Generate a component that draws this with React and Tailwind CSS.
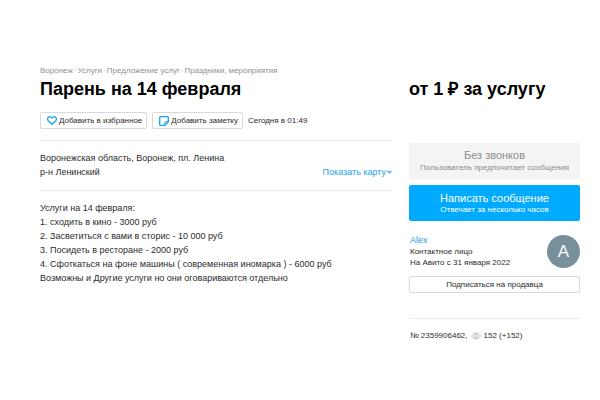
import React from 'react'

const crumbs = ['Воронеж', 'Услуги', 'Предложение услуг', 'Праздники, мероприятия']

const description = [
  'Услуги на 14 февраля:',
  '1. сходить в кино - 3000 руб',
  '2. Засветиться с вами в сторис - 10 000 руб',
  '3. Посидеть в ресторане - 2000 руб',
  '4. Сфоткаться на фоне машины ( современная иномарка ) - 6000 руб',
  'Возможны и Другие услуги но они оговариваются отдельно',
]

function HeartIcon() {
  return (
    <svg viewBox="0 0 10 9" className="h-[9px] w-[10px]" fill="none" stroke="#18a4e8" strokeWidth="1.3" strokeLinejoin="round" aria-hidden="true">
      <path d="M5 8.2 1.3 4.7C.4 3.8.4 2.2 1.2 1.4 2.2.4 3.9.6 5 2 6.1.6 7.8.4 8.8 1.4 9.6 2.2 9.6 3.8 8.7 4.7Z" />
    </svg>
  )
}

function NoteIcon() {
  return (
    <svg viewBox="0 0 10 10" className="size-[10px]" fill="none" stroke="#18a4e8" strokeWidth="1.3" strokeLinejoin="round" aria-hidden="true">
      <path d="M1.6.7h6.8q.9 0 .9.9v4.2L5.8 9.3H1.6q-.9 0-.9-.9V1.6q0-.9.9-.9Z" />
      <path d="M9.3 5.8H6.6q-.8 0-.8.8v2.7" strokeWidth="1" />
    </svg>
  )
}

function EyeIcon() {
  return (
    <svg viewBox="0 0 10 8" className="h-2 w-[10px]" fill="none" stroke="#b4b4b4" strokeWidth=".9" aria-hidden="true">
      <path d="M.6 4C2.7.2 7.3.2 9.4 4 7.3 7.8 2.7 7.8.6 4Z" />
      <circle cx="5" cy="4" r="1.5" />
    </svg>
  )
}

function ActionButton({ icon, children }) {
  return (
    <button type="button" className="flex h-[17px] items-center gap-[2px] rounded-xs border border-[#dadada] pr-1 pl-[6px] text-[8px] leading-none whitespace-nowrap">
      {icon}
      {children}
    </button>
  )
}

function Listing() {
  return (
    <main>
      <nav aria-label="Разделы" className="flex gap-px text-[8px] leading-[10px] whitespace-nowrap text-[#8f8f8f]">
        {crumbs.map((crumb, i) => (
          <React.Fragment key={crumb}>
            {i > 0 ? <span>·</span> : null}
            <a href="#">{crumb}</a>
          </React.Fragment>
        ))}
      </nav>
      <h1 className="mt-[2px] text-[18px] leading-[22px] font-bold text-black">Парень на 14 февраля</h1>
      <div className="mt-3 flex items-center gap-[5px]">
        <ActionButton icon={<HeartIcon />}>Добавить в избранное</ActionButton>
        <ActionButton icon={<NoteIcon />}>Добавить заметку</ActionButton>
        <span className="text-[8px] leading-none whitespace-nowrap">Сегодня в 01:49</span>
      </div>

      <section className="mt-[11px] flex items-end justify-between border-y border-[#ebebeb] pt-[10px] pb-[11px] text-[9px] leading-[14px]">
        <p>
          Воронежская область, Воронеж, пл. Ленина
          <br />
          р-н Ленинский
        </p>
        <button type="button" className="flex items-center gap-px text-[#1da0e2]">
          Показать карту
          <svg viewBox="0 0 5 4" className="h-1 w-[5px]" fill="none" stroke="currentColor" strokeWidth="1.2" aria-hidden="true">
            <path d="m.5.9 2 1.8 2-1.8" />
          </svg>
        </button>
      </section>

      <section className="mt-[10px] text-[9px] leading-[14px]">
        {description.map((line) => (
          <p key={line}>{line}</p>
        ))}
      </section>
    </main>
  )
}

function Seller() {
  return (
    <aside>
      <p className="mt-3 text-[18px] leading-[22px] font-bold text-black">от 1 ₽ за услугу</p>
      <button type="button" disabled className="mt-[43px] flex h-9 w-full flex-col items-center justify-center bg-[#f4f4f4] text-[#8c8c8c]">
        <span className="text-[11px] leading-[14px]">Без звонков</span>
        <span className="text-[8px] leading-3">Пользователь предпочитает сообщения</span>
      </button>
      <button type="button" className="mt-[6px] flex h-9 w-full flex-col items-center justify-center rounded-xs bg-[#00aaff] text-white">
        <span className="text-[11px] leading-[13px]">Написать сообщение</span>
        <span className="text-[8px] leading-[10px]">Отвечает за несколько часов</span>
      </button>

      <div className="mt-[14px] flex items-center justify-between pl-px">
        <div className="text-[8px] leading-[11px]">
          <a href="#" className="text-[9px] text-[#1da0e2]">Alex</a>
          <p>Контактное лицо</p>
          <p>На Авито с 31 января 2022</p>
        </div>
        <div className="flex size-[33px] items-center justify-center rounded-full bg-[#78909c] text-[17px] leading-none text-white">A</div>
      </div>
      <button type="button" className="mt-2 h-[17px] w-full rounded-xs border border-[#dadada] text-[8px] leading-none">
        Подписаться на продавца
      </button>

      <p className="mt-6 flex items-center border-t border-[#ebebeb] pt-3 pl-px text-[8px] leading-[10px]">
        № 2359906462,
        <span className="mr-[3px] ml-[3px]"><EyeIcon /></span>
        152 (+152)
      </p>
    </aside>
  )
}

export default function App() {
  return (
    <div className="min-h-screen bg-white pt-[66px] pr-5 pl-10 font-['Liberation_Sans',sans-serif] text-[#2b2b2b]">
      <div className="grid grid-cols-[352fr_171fr] items-start gap-[17px]">
        <Listing />
        <Seller />
      </div>
    </div>
  )
}
